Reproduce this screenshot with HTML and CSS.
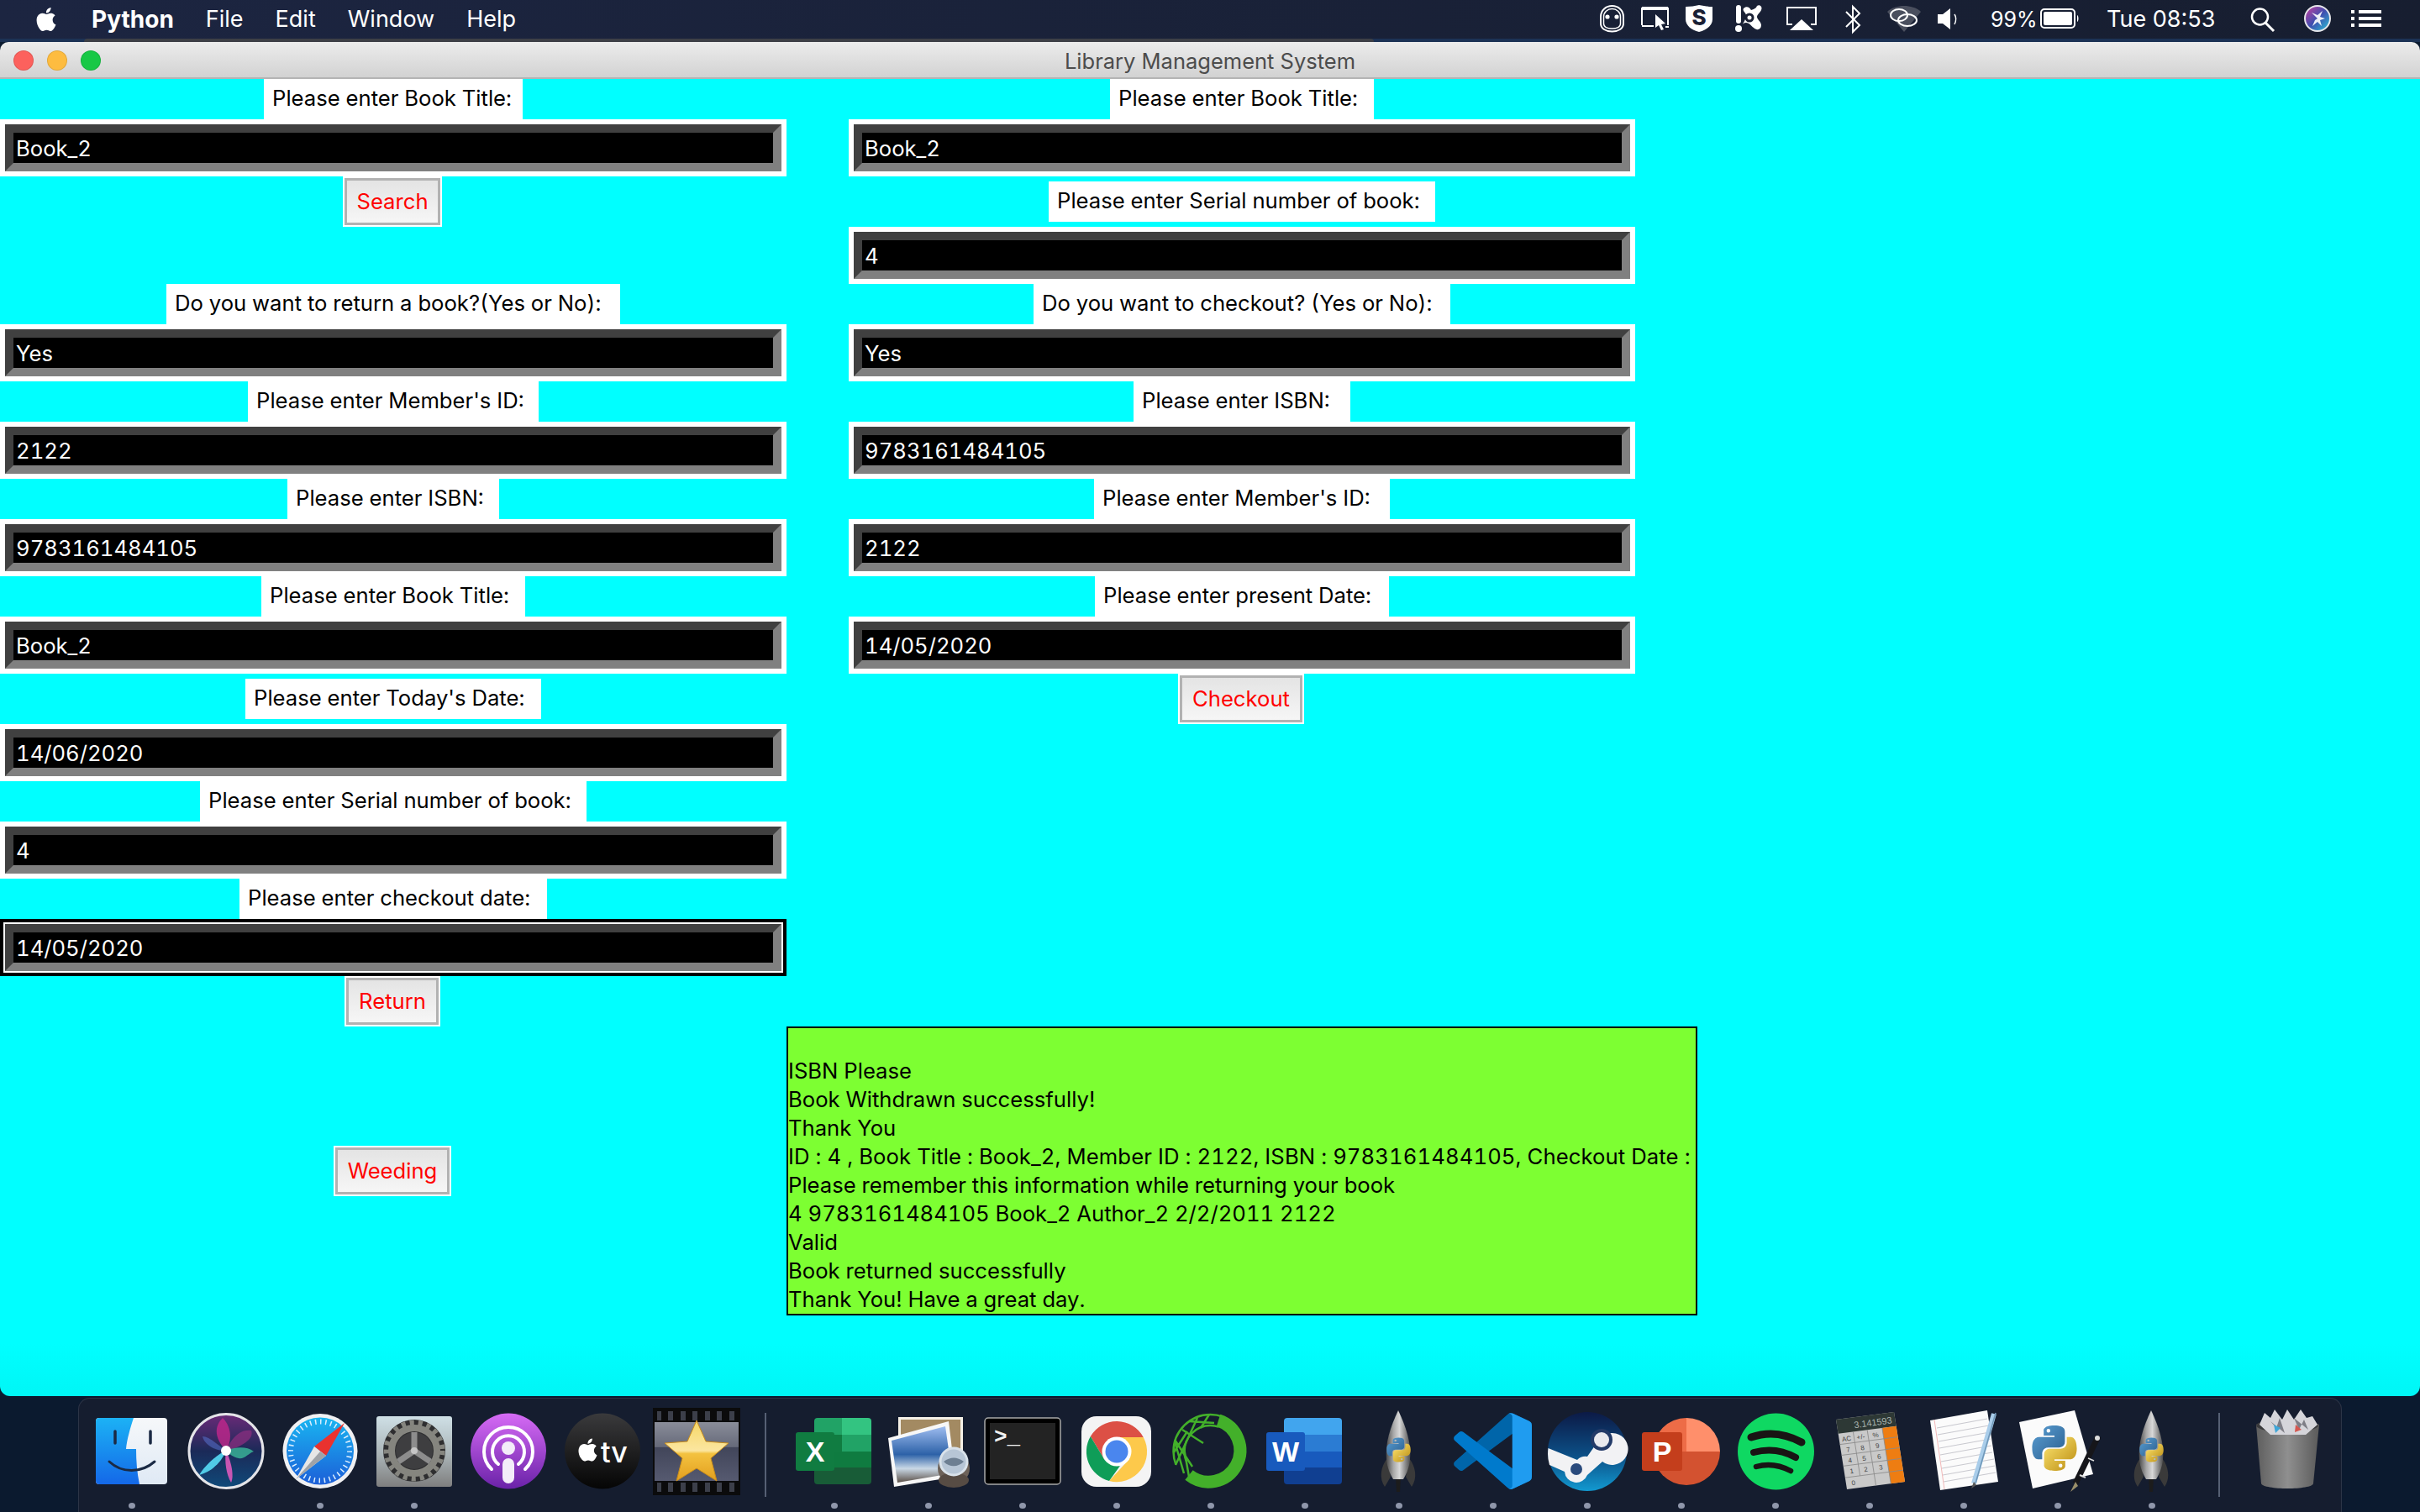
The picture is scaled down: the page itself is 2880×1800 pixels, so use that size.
FILE: index.html
```html
<!DOCTYPE html>
<html lang="en">
<head>
<meta charset="utf-8">
<title>Library Management System</title>
<link rel="stylesheet" href="styles.css">
</head>
<body>
<svg class="defs" width="0" height="0" aria-hidden="true">
  <defs>
    <linearGradient id="pyb" x1="0" y1="0" x2="1" y2="1"><stop offset="0" stop-color="#5a9fd4"/><stop offset="1" stop-color="#2b5f8f"/></linearGradient>
    <linearGradient id="pyy" x1="0" y1="0" x2="1" y2="1"><stop offset="0" stop-color="#b98a10"/><stop offset="1" stop-color="#ffe873"/></linearGradient>
    <linearGradient id="metal" x1="0" y1="0" x2="1" y2="0"><stop offset="0" stop-color="#4a4a4a"/><stop offset=".3" stop-color="#a8a8a8"/><stop offset=".55" stop-color="#d8d8d8"/><stop offset="1" stop-color="#4c4c4c"/></linearGradient>
    <linearGradient id="finderL" x1="0" y1="0" x2="0" y2="1"><stop offset="0" stop-color="#1cb2f5"/><stop offset="1" stop-color="#1468e8"/></linearGradient>
    <linearGradient id="finderR" x1="0" y1="0" x2="0" y2="1"><stop offset="0" stop-color="#f6f8fa"/><stop offset="1" stop-color="#dfe9f5"/></linearGradient>
    <linearGradient id="siriBg" x1="0" y1="0" x2="0" y2="1"><stop offset="0" stop-color="#6a2a78"/><stop offset=".5" stop-color="#1b2a58"/><stop offset="1" stop-color="#0f4a7a"/></linearGradient>
    <linearGradient id="safariBg" x1="0" y1="0" x2="0" y2="1"><stop offset="0" stop-color="#19b5f1"/><stop offset="1" stop-color="#1c5fd8"/></linearGradient>
    <linearGradient id="prefsBg" x1="0" y1="0" x2="0" y2="1"><stop offset="0" stop-color="#cfe0e6"/><stop offset=".55" stop-color="#a9b3b6"/><stop offset="1" stop-color="#7f7f7f"/></linearGradient>
    <linearGradient id="podBg" x1="0" y1="0" x2="0" y2="1"><stop offset="0" stop-color="#d66bf5"/><stop offset="1" stop-color="#6a22a8"/></linearGradient>
    <linearGradient id="tvBg" x1="0" y1="0" x2="0" y2="1"><stop offset="0" stop-color="#3a3a3c"/><stop offset="1" stop-color="#050505"/></linearGradient>
    <linearGradient id="starBg" x1="0" y1="0" x2="0" y2="1"><stop offset="0" stop-color="#8a8d99"/><stop offset=".42" stop-color="#666a7a"/><stop offset=".43" stop-color="#42465a"/><stop offset="1" stop-color="#565a70"/></linearGradient>
    <linearGradient id="starFill" x1="0" y1="0" x2="0" y2="1"><stop offset="0" stop-color="#f6d765"/><stop offset=".5" stop-color="#fbe6a0"/><stop offset=".55" stop-color="#f3c240"/><stop offset="1" stop-color="#e39f1e"/></linearGradient>
    <linearGradient id="steamBg" x1="0" y1="0" x2="0" y2="1"><stop offset="0" stop-color="#0c1a46"/><stop offset=".55" stop-color="#0c4f86"/><stop offset="1" stop-color="#1299d0"/></linearGradient>
    <linearGradient id="trashBg" x1="0" y1="0" x2="1" y2="0"><stop offset="0" stop-color="#5e5e5e"/><stop offset=".5" stop-color="#8f8f8f"/><stop offset="1" stop-color="#5a5a5a"/></linearGradient>
    <linearGradient id="seaBg" x1="0" y1="0" x2="0" y2="1"><stop offset="0" stop-color="#9fbdf0"/><stop offset=".5" stop-color="#2d62a8"/><stop offset=".75" stop-color="#c9d8e6"/><stop offset="1" stop-color="#5c5148"/></linearGradient>
    <linearGradient id="siriMini" x1="0" y1="0" x2="1" y2="1"><stop offset="0" stop-color="#d13a9c"/><stop offset=".5" stop-color="#3f4fb0"/><stop offset="1" stop-color="#29c7d8"/></linearGradient>
    <symbol id="pylogo" viewBox="0 0 24 24">
      <path fill="url(#pyb)" d="M11.900 0C6 0 6.300 2.600 6.300 2.600v2.700h5.700v.8H4.100S.2 5.600.2 11.900s3.300 6 3.300 6h2v-2.900s-.1-3.300 3.300-3.300h5.600s3.100 0 3.100-3.100V3.200S18.100 0 11.900 0zM8.800 1.800a1 1 0 1 1 0 2 1 1 0 0 1 0-2z"/>
      <path fill="url(#pyy)" transform="rotate(180 12 12)" d="M11.900 0C6 0 6.300 2.600 6.300 2.600v2.700h5.700v.8H4.100S.2 5.600.2 11.900s3.300 6 3.300 6h2v-2.900s-.1-3.300 3.300-3.300h5.600s3.100 0 3.100-3.100V3.200S18.100 0 11.900 0zM8.800 1.800a1 1 0 1 1 0 2 1 1 0 0 1 0-2z"/>
    </symbol>
    <symbol id="apple" viewBox="0 0 24 24">
      <path d="M12.152 6.896c-.948 0-2.415-1.078-3.960-1.040-2.040.027-3.910 1.183-4.961 3.014-2.117 3.675-.546 9.103 1.519 12.090 1.013 1.454 2.208 3.090 3.792 3.039 1.520-.065 2.090-.987 3.935-.987 1.831 0 2.350.987 3.960.948 1.637-.026 2.676-1.480 3.676-2.948 1.156-1.688 1.636-3.325 1.662-3.415-.039-.013-3.182-1.221-3.220-4.857-.026-3.040 2.480-4.494 2.597-4.559-1.429-2.090-3.623-2.324-4.390-2.376-2-.156-3.675 1.090-4.610 1.090zM15.530 3.830c.843-1.012 1.400-2.427 1.245-3.830-1.207.052-2.662.805-3.532 1.818-.78.896-1.454 2.338-1.273 3.714 1.338.104 2.715-.688 3.559-1.701"/>
    </symbol>
    <symbol id="rocket" viewBox="0 0 112 108">
      <path fill="#3a3a3a" d="M42 62C34 72 32 86 39 96l7-12zM68 62c8 10 10 24 3 34l-7-12z"/>
      <path fill="#1c1c1c" d="M52 84h6l-1 18h-4z"/>
      <path fill="url(#metal)" d="M55 5C46 24 39 44 41 64c1 10 5 18 8 23h12c3-5 7-13 8-23 2-20-5-40-14-59z"/>
      <use href="#pylogo" x="41" y="36" width="29" height="32"/>
    </symbol>
  </defs>
</svg>

<header class="menubar">
  <svg class="apple-mark" width="28" height="34" viewBox="0 0 24 24" fill="#fff"><use href="#apple"/></svg>
  <nav class="menus">
    <span class="menu menu-app">Python</span>
    <span class="menu">File</span>
    <span class="menu">Edit</span>
    <span class="menu">Window</span>
    <span class="menu">Help</span>
  </nav>
  <div class="status">
    <svg width="49" height="46" viewBox="0 0 49 46" fill="none"><path d="M14.500 7c7 0 13.500 5 13.500 13v8c0 6-6 9.500-13.500 9.500S1 34 1 28v-8C1 12 7.500 7 14.500 7z" stroke="#fff" stroke-width="2"/><path d="M14.500 10.500c5.500 0 10 4 10 9.500v8c0 4-4.500 6-10 6s-10-2-10-6v-8c0-5.500 4.500-9.500 10-9.500z" stroke="#fff" stroke-width="1.500"/><circle cx="9" cy="20" r="2.600" fill="#fff"/><circle cx="20" cy="20" r="2.600" fill="#fff"/></svg>
    <svg width="53" height="46" viewBox="0 0 53 46" fill="none"><path d="M1 30V10h31v20" stroke="#fff" stroke-width="2"/><path d="M1 8h31v4H1z" fill="#fff"/><path d="M1 31h14" stroke="#fff" stroke-width="2"/><path d="M29 32h4" stroke="#fff" stroke-width="2"/><path d="M17 17l0 16 4-3 3 6 3-1-3-6 5-1z" fill="#fff"/></svg>
    <svg width="59" height="46" viewBox="0 0 59 46"><path d="M0 8c6 0 11-1 16-2 5 1 10 2 16 2v15c0 7-7 13-16 15C7 36 0 30 0 23z" fill="#fff"/><text x="16" y="30" class="shield-s" text-anchor="middle">S</text></svg>
    <svg width="61" height="46" viewBox="0 0 61 46" fill="#fff"><rect x="1" y="6" width="6" height="22" rx="3"/><circle cx="4" cy="34" r="4"/><path d="M10 10c3-3 7-2 9 2 3-1 6-2 7-5 3-2 7 1 5 5-1 3-5 5-5 8 0 3 5 6 5 10 0 5-5 7-9 3-3-2-5-6-9-6-4 0-6 4-3 0 2-3 3-7 3-9 0-3-5-5-3-8z"/><circle cx="17" cy="21" r="5.500" fill="#1a2035"/><circle cx="17" cy="21" r="2.500" fill="#fff"/></svg>
    <svg width="70" height="46" viewBox="0 0 70 46" fill="none"><path d="M7 29H1V9h34v20h-6" stroke="#fff" stroke-width="2"/><path d="M18 23l14 13H4z" fill="#fff"/></svg>
    <svg width="50" height="46" viewBox="0 0 50 46" fill="none"><path d="M1 14l16 16-8 8V8l8 8L1 32" stroke="#fff" stroke-width="2"/></svg>
    <svg width="59" height="46" viewBox="0 0 59 46" fill="none"><path d="M0 14C5 9 13 7 20 7s15 2 20 7L20 38z" fill="#4a4f5e"/><ellipse cx="14" cy="18" rx="10" ry="7" stroke="#fff" stroke-width="2"/><ellipse cx="24" cy="24" rx="11" ry="7" stroke="#fff" stroke-width="2"/></svg>
    <svg width="64" height="46" viewBox="0 0 64 46" fill="#fff"><path d="M1 17h6l9-7v25l-9-7H1z"/><path d="M21 17c2 3 2 8 0 12" fill="none" stroke="#fff" stroke-width="1.500"/></svg>
    <span class="stat-text stat-pct">99%</span>
    <svg width="79" height="46" viewBox="0 0 79 46" fill="none"><rect x="1" y="11" width="40" height="22" rx="4" stroke="#fff" stroke-width="2"/><rect x="4" y="14" width="34" height="16" rx="2" fill="#fff"/><path d="M44 18c2 1 2 7 0 8z" fill="#fff"/></svg>
    <span class="stat-text stat-clock">Tue 08:53</span>
    <svg width="64" height="46" viewBox="0 0 64 46" fill="none"><circle cx="11.500" cy="20" r="9.500" stroke="#fff" stroke-width="2.500"/><path d="M18 27l10 10" stroke="#fff" stroke-width="3"/></svg>
    <svg width="56" height="46" viewBox="0 0 56 46" fill="none"><circle cx="16" cy="22" r="15" fill="url(#siriMini)" stroke="#e6e6ea" stroke-width="2"/><path d="M16 22l-7-7 7 3 6-5-3 7 6 2-6 2 2 7-5-5-6 5 3-7z" fill="#fff" opacity=".9"/></svg>
    <svg width="36" height="46" viewBox="0 0 36 46" fill="#fff"><rect x="0" y="12" width="4" height="4"/><rect x="9" y="12" width="27" height="4"/><rect x="0" y="20" width="4" height="4"/><rect x="9" y="20" width="27" height="4"/><rect x="0" y="28" width="4" height="4"/><rect x="9" y="28" width="27" height="4"/></svg>
  </div>
</header>

<div class="backdrop"><div class="behind-window"></div></div>

<section class="window">
  <div class="titlebar">
    <div class="lights">
      <span class="light light-close"></span>
      <span class="light light-min"></span>
      <span class="light light-max"></span>
    </div>
    <div class="title">Library Management System</div>
  </div>
  <main class="content">
    <div class="col col-left">
      <div class="label lw308">Please enter Book Title:</div>
      <div class="entry"><div class="entry-field">Book_2</div></div>
      <button class="btn btn-search">Search</button>
      <div class="label lw540 spaced-top">Do you want to return a book?(Yes or No):</div>
      <div class="entry"><div class="entry-field">Yes</div></div>
      <div class="label lw346">Please enter Member's ID:</div>
      <div class="entry"><div class="entry-field">2122</div></div>
      <div class="label lw252">Please enter ISBN:</div>
      <div class="entry"><div class="entry-field">9783161484105</div></div>
      <div class="label lw314">Please enter Book Title:</div>
      <div class="entry"><div class="entry-field">Book_2</div></div>
      <div class="label lw352 gap6">Please enter Today's Date:</div>
      <div class="entry"><div class="entry-field">14/06/2020</div></div>
      <div class="label lw460">Please enter Serial number of book:</div>
      <div class="entry"><div class="entry-field">4</div></div>
      <div class="label lw366">Please enter checkout date:</div>
      <div class="entry entry-focus"><div class="entry-field">14/05/2020</div></div>
      <button class="btn btn-return">Return</button>
    </div>
    <div class="col col-right">
      <div class="label lw314">Please enter Book Title:</div>
      <div class="entry"><div class="entry-field">Book_2</div></div>
      <div class="label lw460 gap6">Please enter Serial number of book:</div>
      <div class="entry"><div class="entry-field">4</div></div>
      <div class="label lw496">Do you want to checkout? (Yes or No):</div>
      <div class="entry"><div class="entry-field">Yes</div></div>
      <div class="label lw258">Please enter ISBN:</div>
      <div class="entry"><div class="entry-field">9783161484105</div></div>
      <div class="label lw352">Please enter Member's ID:</div>
      <div class="entry"><div class="entry-field">2122</div></div>
      <div class="label lw350">Please enter present Date:</div>
      <div class="entry"><div class="entry-field">14/05/2020</div></div>
      <button class="btn btn-checkout">Checkout</button>
    </div>
    <div class="weeding-cell"><button class="btn btn-weeding">Weeding</button></div>
    <div class="message">
      <div class="msg-line">&nbsp;</div>
      <div class="msg-line">ISBN Please</div>
      <div class="msg-line">Book Withdrawn successfully!</div>
      <div class="msg-line">Thank You</div>
      <div class="msg-line msg-wide">ID : 4 , Book Title : Book_2, Member ID : 2122, ISBN : 9783161484105, Checkout Date :</div>
      <div class="msg-line">Please remember this information while returning your book</div>
      <div class="msg-line">4 9783161484105 Book_2 Author_2 2/2/2011 2122</div>
      <div class="msg-line">Valid</div>
      <div class="msg-line">Book returned successfully</div>
      <div class="msg-line">Thank You! Have a great day.</div>
    </div>
  </main>
</section>

<footer class="dock">
  <div class="dock-item"><svg class="icon" viewBox="0 0 112 108"><rect x="13" y="14" width="85" height="79" rx="4" fill="url(#finderR)"/><path d="M17 14h41c-4 12-8 26-9 37h12c0 14 1 28 4 42H17a4 4 0 0 1-4-4V18a4 4 0 0 1 4-4z" fill="url(#finderL)"/><path d="M36 30v14M78 30v14" stroke="#1b2a44" stroke-width="3.500" stroke-linecap="round"/><path d="M29 66c15 14 38 14 54 0" fill="none" stroke="#1b2a44" stroke-width="3" stroke-linecap="round"/></svg><span class="dot"></span></div>

  <div class="dock-item"><svg class="icon" viewBox="0 0 112 108"><circle cx="56" cy="53.500" r="44" fill="url(#siriBg)" stroke="#e4e4e8" stroke-width="3"/><path d="M56 53C44 40 40 26 52 14c10 10 12 26 4 39z" fill="#c2278c" opacity=".8"/><path d="M56 53c6-14 16-26 30-24 4 10-12 20-30 24z" fill="#8a2f7f" opacity=".75"/><path d="M56 53c10-4 24-6 33 1-6 2-12 10-18 8-6-1-11-5-15-9z" fill="#3bb99a" opacity=".8"/><path d="M56 53c-2 12 0 28 6 38 4-8 0-26-6-38z" fill="#e85bc0" opacity=".85"/><path d="M56 53C44 58 30 72 24 82c14-4 26-14 32-29z" fill="#56dcf5" opacity=".9"/><path d="M56 53C46 46 36 36 28 36c2 10 16 18 28 17z" fill="#5a78d8" opacity=".5"/><circle cx="56" cy="53" r="6" fill="#fff"/></svg></div>

  <div class="dock-item"><svg class="icon" viewBox="0 0 112 108"><circle cx="56" cy="53.500" r="44.500" fill="#f0f0f2"/><circle cx="56" cy="53.500" r="40" fill="url(#safariBg)"/><circle cx="56" cy="53.500" r="35" fill="none" stroke="#dbeeff" stroke-width="6" stroke-dasharray="1.500 4.600"/><path d="M85 20L49 48l14 11z" fill="#e9322f"/><path d="M27 87l22-39 14 11z" fill="#e6e6e6"/><path d="M27 87l36-28-7-5z" fill="#9fa3a8"/></svg><span class="dot"></span></div>

  <div class="dock-item"><svg class="icon" viewBox="0 0 112 108"><rect x="11" y="12" width="90" height="84" rx="3" fill="url(#prefsBg)"/><circle cx="56" cy="53" r="37" fill="#2e2e30"/><circle cx="56" cy="53" r="27" fill="none" stroke="#85857f" stroke-width="8"/><circle cx="56" cy="53" r="33" fill="none" stroke="#85857f" stroke-width="7" stroke-dasharray="5 5"/><circle cx="56" cy="53" r="22" fill="#3e3e40"/><path d="M56 53V31M56 53L37 66M56 53l19 13" stroke="#8d8d8d" stroke-width="7"/><circle cx="56" cy="53" r="4" fill="#c6c6c6"/></svg><span class="dot"></span></div>

  <div class="dock-item"><svg class="icon" viewBox="0 0 112 108" fill="none"><circle cx="56" cy="53.500" r="45" fill="url(#podBg)"/><path d="M36 75A29 29 0 1 1 76 75" stroke="#fff" stroke-width="4" stroke-linecap="round"/><path d="M44 69A19 19 0 1 1 68 69" stroke="#fff" stroke-width="4" stroke-linecap="round"/><circle cx="56" cy="50" r="8" fill="#f3ecf9"/><rect x="49" y="62" width="14" height="30" rx="7" fill="#f3ecf9"/></svg></div>

  <div class="dock-item"><svg class="icon" viewBox="0 0 112 108"><circle cx="56" cy="53.500" r="45" fill="url(#tvBg)"/><use href="#apple" x="25" y="36" width="27" height="32" fill="#fff"/><text x="54" y="67" class="tv-text">tv</text></svg></div>

  <div class="dock-item"><svg class="icon" viewBox="0 0 112 108"><rect x="4" y="2" width="104" height="104" fill="#0b0b0c"/><rect x="6" y="19" width="100" height="70" fill="url(#starBg)"/><path d="M9 6h5v11H9zM22 6h6v11h-6zM37 6h6v11h-6zM51 6h6v11h-6zM66 6h6v11h-6zM80 6h6v11h-6zM95 6h6v11h-6zM9 91h5v11H9zM22 91h6v11h-6zM37 91h6v11h-6zM51 91h6v11h-6zM66 91h6v11h-6zM80 91h6v11h-6zM95 91h6v11h-6z" fill="#3c3f4a"/><path d="M56 17l11 25 27 2-21 18 7 27-24-15-24 15 7-27-21-18 27-2z" fill="url(#starFill)" stroke="#c98c1a" stroke-width="1"/></svg></div>

  <div class="dock-sep"></div>

  <div class="dock-item"><svg class="icon" viewBox="0 0 112 108"><path d="M36 14h29v20H32V18a4 4 0 0 1 4-4z" fill="#21a366"/><path d="M65 14h31a4 4 0 0 1 4 4v16H65z" fill="#33c481"/><rect x="32" y="34" width="33" height="20" fill="#107c41"/><rect x="65" y="34" width="35" height="20" fill="#21a366"/><rect x="32" y="54" width="68" height="19" fill="#0f7b40"/><path d="M32 73h68v16a4 4 0 0 1-4 4H36a4 4 0 0 1-4-4z" fill="#185c37"/><rect x="10" y="31" width="46" height="46" rx="3" fill="#107c41"/><text x="33" y="66" class="office-text" text-anchor="middle">X</text></svg><span class="dot"></span></div>

  <div class="dock-item"><svg class="icon" viewBox="0 0 112 108"><rect x="20" y="13" width="77" height="60" fill="#f4f0e6"/><rect x="23" y="16" width="71" height="54" fill="#a38a62"/><path d="M8 38L80 18l8 66-73 12z" fill="#f7f7f7"/><path d="M12 41L76 24l8 56-65 11z" fill="url(#seaBg)"/><circle cx="86" cy="74" r="19" fill="#6d6259"/><ellipse cx="86" cy="88" rx="18" ry="9" fill="#574c44"/><circle cx="86" cy="66" r="16" fill="#b7c6d6" stroke="#d9e2ea" stroke-width="3"/><path d="M74 66c8-6 16-6 24 0-6 6-16 8-24 0z" fill="#6d7f92"/></svg><span class="dot"></span></div>

  <div class="dock-item"><svg class="icon" viewBox="0 0 112 108"><rect x="11" y="14" width="90" height="79" rx="4" fill="#000" stroke="#a8a8a8" stroke-width="1.500"/><rect x="17" y="20" width="78" height="67" fill="#232323"/><text x="22" y="44" class="term-text">&gt;_</text></svg><span class="dot"></span></div>

  <div class="dock-item"><svg class="icon" viewBox="0 0 112 108"><rect x="14" y="12" width="83" height="84" rx="18" fill="#f4f4f4"/><path d="M87.700 37A36 36 0 0 0 24.800 36L41 63z" fill="#dc5045"/><path d="M87.700 37A36 36 0 0 1 47 89L71 63 56 37z" fill="#fdc94b"/><path d="M24.800 36A36 36 0 0 0 47 89L65 64 41 63z" fill="#0f9d58"/><circle cx="56" cy="54" r="17.500" fill="#fff"/><circle cx="56" cy="54" r="13.500" fill="#4a86ee"/></svg><span class="dot"></span></div>

  <div class="dock-item"><svg class="icon" viewBox="0 0 112 108" fill="none"><path d="M65 17A37.500 37.500 0 1 1 30 82" stroke="#43b02a" stroke-width="15"/><circle cx="55.500" cy="54" r="44" stroke="#43b02a" stroke-width="2.500" stroke-dasharray="100 180" stroke-dashoffset="-122"/><circle cx="55.500" cy="54" r="31" stroke="#43b02a" stroke-width="2.500" stroke-dasharray="70 130" stroke-dashoffset="-86"/><path d="M13 40L34 72M12 55L28 30M14 70L40 14M22 28L47 44M30 18L60 20M24 80L13 42M30 84L24 50M54 10L44 26" stroke="#43b02a" stroke-width="2.500"/></svg><span class="dot"></span></div>

  <div class="dock-item"><svg class="icon" viewBox="0 0 112 108"><path d="M35 14h61a4 4 0 0 1 4 4v16H31V18a4 4 0 0 1 4-4z" fill="#41a5ee"/><rect x="31" y="34" width="69" height="20" fill="#2b7cd3"/><rect x="31" y="54" width="69" height="19" fill="#185abd"/><path d="M31 73h69v16a4 4 0 0 1-4 4H35a4 4 0 0 1-4-4z" fill="#103f91"/><rect x="10" y="31" width="46" height="46" rx="3" fill="#185abd"/><text x="33" y="66" class="office-text" text-anchor="middle">W</text></svg><span class="dot"></span></div>

  <div class="dock-item"><svg class="icon" viewBox="0 0 112 108"><use href="#rocket" width="112" height="108"/></svg><span class="dot"></span></div>

  <div class="dock-item"><svg class="icon" viewBox="0 0 112 108"><g transform="translate(9 8) scale(.93 .91)"><path fill="#0065a9" d="M96.500 10.800 75.900.9a6.200 6.200 0 0 0-7.100 1.200L1.400 63.600a4.200 4.200 0 0 0 0 6.100l5.500 5a4.200 4.200 0 0 0 5.300.2L93.400 13.500a4.100 4.100 0 0 1 6.600 3.300v-.2a6.200 6.200 0 0 0-3.500-5.800z"/><path fill="#007acc" d="M96.500 89.200l-20.600 9.900a6.200 6.200 0 0 1-7.100-1.200L1.400 36.400a4.200 4.200 0 0 1 0-6.100l5.500-5a4.200 4.200 0 0 1 5.300-.2l81.200 61.400a4.100 4.100 0 0 0 6.600-3.300v.2a6.200 6.200 0 0 1-3.500 5.800z"/><path fill="#1f9cf0" d="M75.900 99.100a6.200 6.200 0 0 1-7.100-1.200c2.300 2.300 6.200.7 6.200-2.600V4.700c0-3.300-3.900-4.900-6.200-2.600a6.200 6.200 0 0 1 7.100-1.200l20.600 9.900A6.200 6.200 0 0 1 100 16.400v67.200a6.200 6.200 0 0 1-3.500 5.600z"/></g></svg><span class="dot"></span></div>

  <div class="dock-item"><svg class="icon" viewBox="0 0 112 108"><circle cx="56" cy="54" r="47" fill="url(#steamBg)"/><path d="M9.500 50L44 64a14 14 0 0 1 12-4L70 40a19 19 0 1 1 4 26L56 82a14 14 0 0 1-27-4L11 70a47 47 0 0 1-1.500-20z" fill="#f2f2f4"/><circle cx="73" cy="40" r="13" fill="#233a68"/><circle cx="73" cy="40" r="9" fill="#e9e9ee"/><circle cx="43" cy="75" r="7" fill="#2a4a7c"/></svg><span class="dot"></span></div>

  <div class="dock-item"><svg class="icon" viewBox="0 0 112 108"><path d="M22 54a40 40 0 0 1 40-40v40z" fill="#ed6c47"/><path d="M62 14a40 40 0 0 1 40 40H62z" fill="#ff8f6b"/><path d="M22 54h80a40 40 0 0 1-80 0z" fill="#d35230"/><rect x="9" y="31" width="48" height="46" rx="3" fill="#c43e1c"/><text x="33" y="66" class="office-text" text-anchor="middle">P</text></svg><span class="dot"></span></div>

  <div class="dock-item"><svg class="icon" viewBox="0 0 112 108" fill="none"><circle cx="56.500" cy="54" r="45.500" fill="#0fd862"/><path d="M27 37c20-7 40-5 60 6" stroke="#191414" stroke-width="9" stroke-linecap="round"/><path d="M30 55c18-5 34-3 50 6" stroke="#191414" stroke-width="8" stroke-linecap="round"/><path d="M33 72c14-4 28-2 41 5" stroke="#191414" stroke-width="6.500" stroke-linecap="round"/></svg><span class="dot"></span></div>

  <div class="dock-item"><svg class="icon" viewBox="0 0 112 108"><g transform="matrix(.986 -.129 .155 .988 16 16)"><rect width="70" height="84" fill="#c9c9c9"/><rect width="70" height="17" fill="#2d3835"/><text x="66" y="13" class="calc-text" text-anchor="end">3.141593</text><rect x="53" y="17" width="17" height="67" fill="#ee7d12"/><path d="M0 30h70M0 43h70M0 56h70M0 70h70M18 17v53M35 17v67M53 17v67" stroke="#8a8a8a" stroke-width=".8"/><text x="9" y="27" class="calc-key" text-anchor="middle">AC</text><text x="26" y="27" class="calc-key" text-anchor="middle">+/-</text><text x="44" y="27" class="calc-key" text-anchor="middle">%</text><text x="9" y="40" class="calc-key" text-anchor="middle">7</text><text x="26" y="40" class="calc-key" text-anchor="middle">8</text><text x="44" y="40" class="calc-key" text-anchor="middle">9</text><text x="9" y="53" class="calc-key" text-anchor="middle">4</text><text x="26" y="53" class="calc-key" text-anchor="middle">5</text><text x="44" y="53" class="calc-key" text-anchor="middle">6</text><text x="9" y="66" class="calc-key" text-anchor="middle">1</text><text x="26" y="66" class="calc-key" text-anchor="middle">2</text><text x="44" y="66" class="calc-key" text-anchor="middle">3</text><text x="9" y="80" class="calc-key" text-anchor="middle">0</text></g></svg><span class="dot"></span></div>

  <div class="dock-item"><svg class="icon" viewBox="0 0 112 108" fill="none"><path d="M16 17L84 5l13 85-69 10z" fill="#fbfbfb"/><path d="M24 26L84 15M25 34L86 23M26 42L87 31M27 50L88 39M28 58L89 47M29 66L90 55M30 74L92 63M31 82L93 71M32 90L94 79" stroke="#c9c9cf" stroke-width="1.100"/><path d="M21 16L33 99" stroke="#f2b8b8" stroke-width="1"/><path d="M92 9L68 92" stroke="#a9cdea" stroke-width="6"/><path d="M94 8L70 92" stroke="#6f97b8" stroke-width="1.500"/><path d="M68 90L65 98l6-4z" fill="#555"/></svg><span class="dot"></span></div>

  <div class="dock-item"><svg class="icon" viewBox="0 0 112 108" fill="none"><path d="M10 19L76 5l22 76-72 17z" fill="#fbfbfb"/><use href="#pylogo" x="25" y="23" width="54" height="54"/><path d="M104 36L77 92" stroke="#16161a" stroke-width="7"/><path d="M77 90L71 102l9-7z" fill="#9a8f6a"/><circle cx="103" cy="38" r="3" fill="#ddd"/><path d="M92 62l7 3" stroke="#ddd" stroke-width="1.500"/><path d="M82 82l7 3" stroke="#ddd" stroke-width="2"/></svg><span class="dot"></span></div>

  <div class="dock-item"><svg class="icon" viewBox="0 0 112 108"><use href="#rocket" width="112" height="108"/></svg><span class="dot"></span></div>

  <div class="dock-sep dock-sep-end"></div>

  <div class="dock-item"><svg class="icon" viewBox="0 0 112 108"><path d="M19 22c10-5 65-5 75 0l-7 70c-1 8-60 8-62 0z" fill="url(#trashBg)"/><ellipse cx="56" cy="23" rx="37" ry="8" fill="#3a3a3c"/><path d="M23 22l6-14 7 6 5-10 9 12 6-12 8 12 8-12 7 10 7-2 6 10-14 12H36z" fill="#d5d5da"/><path d="M36 18l7 8 4-12 6 18zM64 14l6 14 6-12 5 12z" fill="#7e7e86"/><path d="M40 22l8 4-6 6z" fill="#3fa6d8"/><path d="M66 22l7 6-8 3z" fill="#d5574f"/></svg></div>
</footer>
</body>
</html>
```
FILE: styles.css
```css
* { box-sizing: border-box; margin: 0; padding: 0; }
html, body { width: 2880px; height: 1800px; overflow: hidden; }
body {
  display: flex;
  flex-direction: column;
  background: #0b1a2f;
  font-family: Inter, "Liberation Sans", sans-serif;
  color: #000;
}
.defs { position: absolute; }

/* menu bar */
.menubar {
  display: flex;
  align-items: center;
  height: 46px;
  flex: none;
  padding-left: 41px;
  padding-right: 46px;
  background: linear-gradient(90deg, #1c2541, #171e30);
  color: #fff;
}
.apple-mark { flex: none; }
.menus { display: flex; margin-left: 40px; font-size: 27px; line-height: 46px; }
.menu { margin-right: 38px; }
.menu-app { font-size: 28px; font-weight: 700; margin-right: 38px; }
.status { display: flex; align-items: center; margin-left: auto; }
.status svg { display: block; flex: none; }
.stat-text { font-size: 25px; line-height: 46px; color: #fff; }
.stat-pct { width: 59px; }
.stat-clock { width: 171px; font-size: 27px; }
.shield-s { font: 800 26px Inter, sans-serif; fill: #1a2035; }

/* desktop strip */
.backdrop { height: 4px; flex: none; background: #1c3255; display: flex; padding-left: 100px; }
.behind-window { width: 1535px; height: 4px; background: #3d3f46; border-radius: 8px 8px 0 0; }

/* window */
.window {
  display: flex;
  flex-direction: column;
  height: 1612px;
  flex: none;
  border-radius: 10px 10px 12px 12px;
  overflow: hidden;
}
.titlebar {
  position: relative;
  display: flex;
  align-items: center;
  justify-content: center;
  height: 44px;
  flex: none;
  background: linear-gradient(#ececec, #d2d2d2);
  border-bottom: 2px solid #b4b4b4;
}
.lights { position: absolute; left: 16px; top: 10px; display: flex; gap: 16px; }
.light { width: 24px; height: 24px; border-radius: 50%; border: 1px solid rgba(0,0,0,.1); }
.light-close { background: #fc615d; }
.light-min { background: #fdbc40; }
.light-max { background: #18c846; }
.title { font-size: 25.500px; color: #4c4c4c; line-height: 44px; padding-top: 3px; }

.content {
  display: grid;
  grid-template-columns: 936px 1084px;
  grid-template-rows: 1128px 344px;
  flex: 1;
  background: linear-gradient(#00ffff 96%, #00f6f6);
  font-size: 25.650px;
  font-variant-numeric: tabular-nums;
}
.col { display: flex; flex-direction: column; align-items: center; width: 936px; }
.col-right { margin-left: 74px; }
.label {
  height: 48px;
  flex: none;
  background: #fff;
  padding-left: 10px;
  line-height: 46px;
  white-space: nowrap;
}
.gap6 { margin-top: 6px; margin-bottom: 6px; }
.spaced-top { margin-top: 68px; }
.lw252 { width: 252px; } .lw258 { width: 258px; }
.lw308 { width: 308px; } .lw314 { width: 314px; }
.lw346 { width: 346px; } .lw350 { width: 350px; }
.lw352 { width: 352px; } .lw366 { width: 366px; }
.lw460 { width: 460px; } .lw496 { width: 496px; }
.lw540 { width: 540px; }

.entry {
  width: 936px;
  height: 68px;
  flex: none;
  background: #fff;
  border: 4px solid #fff;
  padding: 2px;
}
.entry-focus { border-color: #000; }
.entry-field {
  height: 56px;
  background: #000;
  border: 10px solid;
  border-color: #404040 #808080 #808080 #404040;
  color: #fff;
  padding-left: 3px;
  line-height: 38px;
  white-space: nowrap;
}

.btn {
  height: 56px;
  flex: none;
  border: 3px solid #b2b2b2;
  outline: 2px solid #fff;
  outline-offset: 0;
  margin: 2px 3px 2px 1px;
  padding-bottom: 2px;
  background: linear-gradient(#e4e4e4, #f6f6f6);
  color: #f00;
  font: inherit;
}
.btn-search { width: 114px; }
.btn-return { width: 110px; }
.btn-checkout { width: 146px; }
.btn-weeding { width: 136px; }

.weeding-cell { display: flex; justify-content: center; align-items: flex-start; padding-top: 142px; }
.message {
  width: 1084px;
  height: 344px;
  background: #7dff32;
  border: 2px solid #000;
  overflow: hidden;
  white-space: nowrap;
}
.msg-line { height: 34px; line-height: 34px; }
.msg-wide { letter-spacing: .1px; }

/* dock */
.dock {
  display: flex;
  align-items: flex-start;
  width: 2694px;
  height: 136px;
  margin-top: 2px;
  margin-left: 93px;
  padding: 9px 8px 0 7px;
  background: #151d2f;
  border: 1px solid #2c3446;
  border-bottom: 0;
  border-radius: 14px 14px 0 0;
}
.dock-item { display: flex; flex-direction: column; align-items: center; width: 112px; flex: none; }
.icon { display: block; width: 112px; height: 108px; }
.dot { width: 8px; height: 7px; margin-top: 7px; border-radius: 50%; background: #8f97ab; }
.dock-sep { width: 52px; flex: none; display: flex; justify-content: center; }
.dock-sep::before { content: ""; width: 2px; height: 100px; margin-top: 8px; margin-left: -1px; background: #566074; }
.dock-sep-end { width: 49px; }

.tv-text { font: 500 34px Inter, sans-serif; fill: #fff; }
.office-text { font: 700 34px "Liberation Sans", sans-serif; fill: #fff; }
.term-text { font: 700 26px "Liberation Mono", monospace; fill: #f2f2f2; }
.calc-text { font: 400 11px "Liberation Sans", sans-serif; fill: #a9b3ae; }
.calc-key { font: 400 8px "Liberation Sans", sans-serif; fill: #444; }
```
